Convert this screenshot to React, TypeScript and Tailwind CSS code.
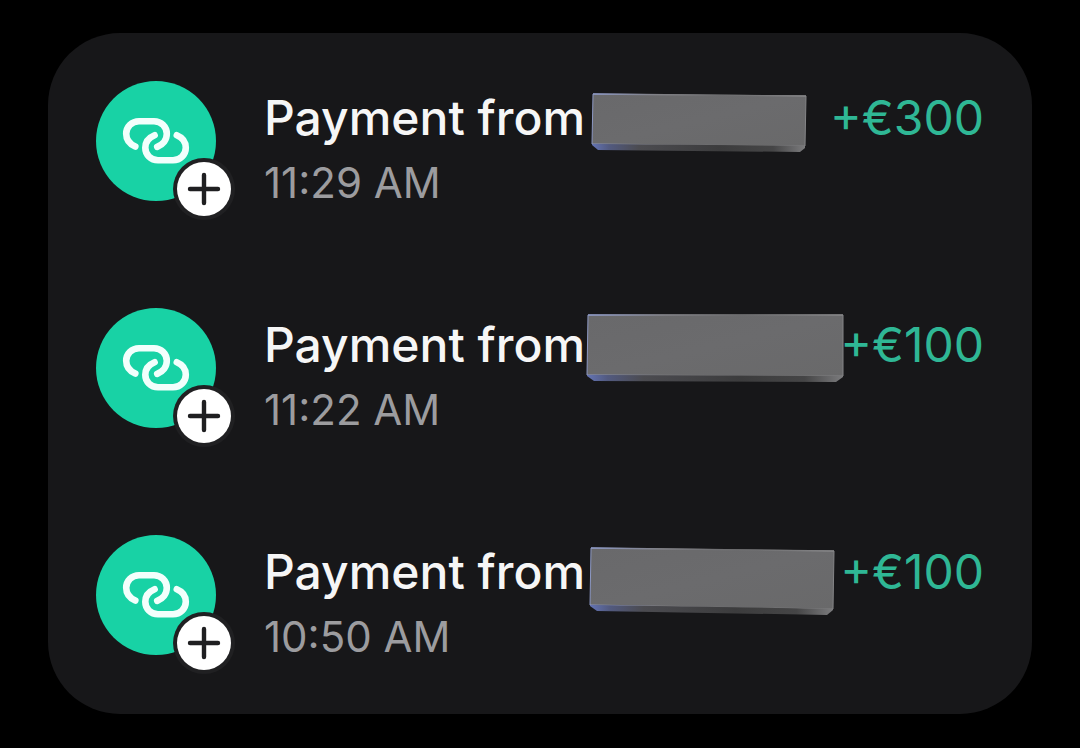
type Block = {
  width: number;
  height: number;
  face: string;
  edge: string;
  rim: string;
  place: string;
};

type Payment = { id: string; time: string; amount: string; block: Block };

const payments: Payment[] = [
  {
    id: "first",
    time: "11:29 AM",
    amount: "+€300",
    block: {
      width: 216,
      height: 60,
      face: "M2 1 L215 3 L214 53 L1 51 Z",
      edge: "M1 51 L214 53 L214 55 L209 59 L7 57 L1 52 Z",
      rim: "M2 1 L215 3",
      place: "left-full top-2 ml-1.5",
    },
  },
  {
    id: "second",
    time: "11:22 AM",
    amount: "+€100",
    block: {
      width: 258,
      height: 69,
      face: "M2 1 L257 1 L257 62 L1 61 Z",
      edge: "M1 61 L257 62 L257 63 L250 68 L8 67 L1 62 Z",
      rim: "M2 1 L257 1",
      place: "left-full top-0.5 ml-px",
    },
  },
  {
    id: "third",
    time: "10:50 AM",
    amount: "+€100",
    block: {
      width: 246,
      height: 69,
      face: "M2 1 L245 4 L244 62 L1 58 Z",
      edge: "M1 58 L244 62 L244 63 L238 68 L8 64 L1 59 Z",
      rim: "M2 1 L245 4",
      place: "left-full top-2 ml-1",
    },
  },
];

function LinkIcon() {
  return (
    <svg
      viewBox="0 0 120 120"
      className="size-30"
      fill="none"
      stroke="#f2fffc"
      strokeWidth="6.6"
      strokeLinecap="round"
      aria-hidden="true"
    >
      <path d="M39.3 65.6 C33.6 63 30.2 58.4 30.2 52.8 C30.2 45.8 35.8 40.3 43 40.3 H58 C65.2 40.3 70.8 45.8 70.8 52.8 C70.8 58.8 67 63.6 61.2 65.8" />
      <path d="M58.6 54.2 C52.8 56.6 49.3 61 49.3 66.8 C49.3 73.8 54.8 79.3 62 79.3 H77 C84.2 79.3 89.8 73.8 89.8 66.8 C89.8 61 86.2 56.4 80.8 54.2" />
    </svg>
  );
}

function PlusBadge() {
  return (
    <span className="absolute -right-[19px] -bottom-[19px] rounded-full bg-[#202022] p-1">
      <svg
        viewBox="0 0 54 54"
        className="size-13.5"
        aria-hidden="true"
      >
        <circle cx="27" cy="27" r="27" fill="#ffffff" />
        <path
          d="M27 13 V41 M13 27 H41"
          stroke="#1f1f21"
          strokeWidth="4.4"
          strokeLinecap="round"
        />
      </svg>
    </span>
  );
}

function NameBlock({ id, block }: { id: string; block: Block }) {
  return (
    <svg
      width={block.width}
      height={block.height}
      className={`absolute max-w-none ${block.place}`}
      aria-hidden="true"
    >
      <defs>
        <linearGradient id={`${id}-face`} x1="0" y1="0" x2="1" y2="1">
          <stop offset="0" stopColor="#69696b" />
          <stop offset="0.5" stopColor="#6b6b6d" />
          <stop offset="1" stopColor="#69696a" />
        </linearGradient>
        <linearGradient id={`${id}-edge`} x1="0" y1="0" x2="1" y2="0">
          <stop offset="0" stopColor="#6474b4" />
          <stop offset="0.08" stopColor="#525a80" />
          <stop offset="0.22" stopColor="#4b4b50" />
          <stop offset="0.6" stopColor="#3c3c3d" />
          <stop offset="0.85" stopColor="#454546" />
          <stop offset="1" stopColor="#7b7b7d" />
        </linearGradient>
        <linearGradient
          id={`${id}-rim`}
          gradientUnits="userSpaceOnUse"
          x1="0"
          y1="0"
          x2={block.width}
          y2="0"
        >
          <stop offset="0" stopColor="#8c98c4" />
          <stop offset="0.3" stopColor="#808085" />
          <stop offset="0.6" stopColor="#6c6c6e" />
          <stop offset="1" stopColor="#848486" />
        </linearGradient>
      </defs>
      <path
        d={block.face}
        fill={`url(#${id}-face)`}
        stroke={`url(#${id}-rim)`}
        strokeWidth="1"
        strokeLinejoin="round"
      />
      <path d={block.edge} fill={`url(#${id}-edge)`} />
      <path d={block.rim} stroke={`url(#${id}-rim)`} strokeWidth="1.4" />
    </svg>
  );
}

export default function App() {
  return (
    <main className="min-h-screen bg-black px-12 pt-[33px] pb-8 font-['Inter',sans-serif]">
      <ul className="rounded-[72px] bg-[#171719]">
        {payments.map(({ id, time, amount, block }) => (
          <li key={id} className="flex h-[227px] items-start px-12 pt-12">
            <div className="relative shrink-0 rounded-full bg-[#18d2a5]">
              <LinkIcon />
              <PlusBadge />
            </div>
            <div className="ml-12 grow pt-1">
              <h2 className="text-5xl/[66px] font-medium whitespace-nowrap text-[#f6f6f6]">
                <span className="relative inline-block">
                  Payment from
                  <NameBlock id={id} block={block} />
                </span>
              </h2>
              <p className="text-[42px]/16 text-[#9c9c9f]">{time}</p>
            </div>
            <p className="pt-1 text-5xl/[66px] whitespace-nowrap text-[#2fb795]">{amount}</p>
          </li>
        ))}
      </ul>
    </main>
  );
}
